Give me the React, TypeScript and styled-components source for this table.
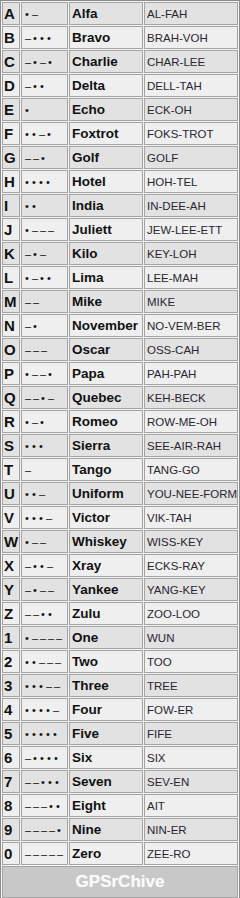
import React from "react";
import styled, { createGlobalStyle } from "styled-components";

const GlobalStyle = createGlobalStyle`
  html, body {
    margin: 0;
    padding: 0;
    background: #ffffff;
  }
  body {
    font-family: "Liberation Sans", Arial, sans-serif;
  }
`;

type Row = [string, string, string, string];

const rows: Row[] = [
    ["A", ".-", "Alfa", "AL-FAH"],
    ["B", "-...", "Bravo", "BRAH-VOH"],
    ["C", "-.-.", "Charlie", "CHAR-LEE"],
    ["D", "-..", "Delta", "DELL-TAH"],
    ["E", ".", "Echo", "ECK-OH"],
    ["F", "..-.", "Foxtrot", "FOKS-TROT"],
    ["G", "--.", "Golf", "GOLF"],
    ["H", "....", "Hotel", "HOH-TEL"],
    ["I", "..", "India", "IN-DEE-AH"],
    ["J", ".---", "Juliett", "JEW-LEE-ETT"],
    ["K", "-.-", "Kilo", "KEY-LOH"],
    ["L", ".-..", "Lima", "LEE-MAH"],
    ["M", "--", "Mike", "MIKE"],
    ["N", "-.", "November", "NO-VEM-BER"],
    ["O", "---", "Oscar", "OSS-CAH"],
    ["P", ".--.", "Papa", "PAH-PAH"],
    ["Q", "--.-", "Quebec", "KEH-BECK"],
    ["R", ".-.", "Romeo", "ROW-ME-OH"],
    ["S", "...", "Sierra", "SEE-AIR-RAH"],
    ["T", "-", "Tango", "TANG-GO"],
    ["U", "..-", "Uniform", "YOU-NEE-FORM"],
    ["V", "...-", "Victor", "VIK-TAH"],
    ["W", ".--", "Whiskey", "WISS-KEY"],
    ["X", "-..-", "Xray", "ECKS-RAY"],
    ["Y", "-.--", "Yankee", "YANG-KEY"],
    ["Z", "--..", "Zulu", "ZOO-LOO"],
    ["1", ".----", "One", "WUN"],
    ["2", "..---", "Two", "TOO"],
    ["3", "...--", "Three", "TREE"],
    ["4", "....-", "Four", "FOW-ER"],
    ["5", ".....", "Five", "FIFE"],
    ["6", "-....", "Six", "SIX"],
    ["7", "--...", "Seven", "SEV-EN"],
    ["8", "---..", "Eight", "AIT"],
    ["9", "----.", "Nine", "NIN-ER"],
    ["0", "-----", "Zero", "ZEE-RO"],
];

const Table = styled.table`
    width: 240px;
    border: 1px solid #8c8c8c;
    border-spacing: 1px;
    background: #f4f4f4;
    table-layout: fixed;
`;

const Tr = styled.tr<{ $odd: boolean }>`
    background: ${(p) => (p.$odd ? "#e2e2e2" : "#efefef")};
`;

const Cell = styled.td`
    height: 21px;
    padding: 0 0 0 2px;
    border: 1px solid #a4a4a4;
    vertical-align: middle;
    white-space: nowrap;
    overflow: hidden;
`;

const LetterCell = styled(Cell)`
    width: 15px;
    padding-left: 1px;
    font-size: 15px;
    font-weight: bold;
    color: #111;
`;

const MorseCell = styled(Cell)`
    width: 42px;
    padding-left: 3px;
    font-size: 11px;
    color: #111;
`;

const WordCell = styled(Cell)`
    width: 70px;
    font-size: 13.5px;
    font-weight: bold;
    color: #111;
`;

const SayCell = styled(Cell)`
    font-size: 11.5px;
    color: #2a2630;
`;

const Footer = styled.td`
    height: 28px;
    border: 1px solid #a4a4a4;
    background: #c8c8c8;
    text-align: center;
    font-size: 17px;
    font-weight: bold;
    color: #fafafa;
    text-shadow: 0 0 1px #e4e4e4;
`;

const Mark = styled.span<{ $dash: boolean }>`
    display: inline-block;
    width: ${(p) => (p.$dash ? "8px" : "7px")};
`;

const Morse = ({ code }: { code: string }) => (
    <>
        {code.split("").map((c, i) => (
            <Mark key={i} $dash={c === "-"}>
                {c === "-" ? "–" : "•"}
            </Mark>
        ))}
    </>
);

export default function App() {
    return (
        <>
            <GlobalStyle />
            <Table>
                <tbody>
                {rows.map(([letter, code, word, say], i) => (
                    <Tr key={letter} $odd={i % 2 === 0}>
                        <LetterCell>{letter}</LetterCell>
                        <MorseCell>
                            <Morse code={code} />
                        </MorseCell>
                        <WordCell>{word}</WordCell>
                        <SayCell>{say}</SayCell>
                    </Tr>
                ))}
                <tr>
                    <Footer colSpan={4}>GPSrChive</Footer>
                </tr>
                </tbody>
            </Table>
        </>
    );
}
